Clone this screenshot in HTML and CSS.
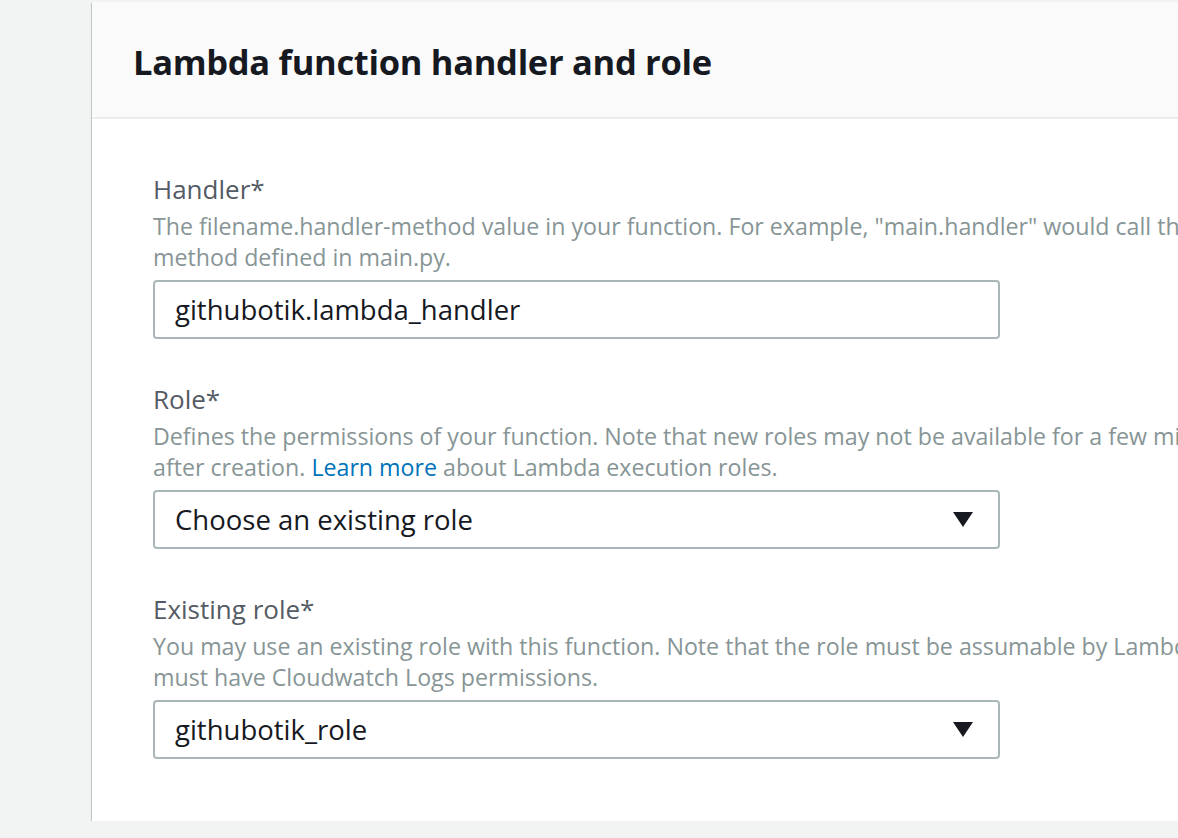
FILE: index.html
```html
<!DOCTYPE html>
<html>
<head>
<meta charset="utf-8">
<link rel="stylesheet" href="styles.css">
</head>
<body>
<div class="page">
  <section class="card">
    <header class="card-header">
      <h2 class="card-title">Lambda function handler and role</h2>
    </header>
    <div class="card-body">
      <div class="field">
        <div class="label">Handler*</div>
        <div class="desc">The filename.handler-method value in your function. For example, "main.handler" would call the handler<br>method defined in main.py.</div>
        <div class="input">githubotik.lambda_handler</div>
      </div>
      <div class="field">
        <div class="label">Role*</div>
        <div class="desc">Defines the permissions of your function. Note that new roles may not be available for a few minutes<br>after creation. <a class="link" href="#">Learn more</a> about Lambda execution roles.</div>
        <div class="input select"><span>Choose an existing role</span><span class="caret"></span></div>
      </div>
      <div class="field">
        <div class="label">Existing role*</div>
        <div class="desc">You may use an existing role with this function. Note that the role must be assumable by Lambda and<br>must have Cloudwatch Logs permissions.</div>
        <div class="input select"><span>githubotik_role</span><span class="caret"></span></div>
      </div>
    </div>
  </section>
</div>
</body>
</html>
```

FILE: styles.css
```css
html, body {
  margin: 0;
  padding: 0;
  background: #f2f3f3;
  font-family: "Open Sans", "Noto Sans", sans-serif;
  overflow: hidden;
}
.page {
  padding: 2px 0 0 92px;
  width: 1200px;
}
.card {
  width: 1200px;
  background: #fff;
  box-shadow: 0 1px 1px 0 rgba(0,28,36,0.3), 1px 1px 1px 0 rgba(0,28,36,0.15), -1px 1px 1px 0 rgba(0,28,36,0.15);
}
.card-header {
  background: #fafafa;
  border-bottom: 2px solid #eaeded;
  height: 117px;
  box-sizing: border-box;
  display: flex;
  align-items: center;
  padding: 3px 41px 0;
}
.card-title {
  margin: 0;
  font-size: 34.5px;
  font-weight: 700;
  color: #16191f;
  letter-spacing: -0.3px;
}
.card-body {
  padding: 52px 61px 62px;
  display: flex;
  flex-direction: column;
  gap: 42px;
}
.field {
  width: 1200px;
}
.label {
  font-size: 26px;
  color: #545b64;
  line-height: 36px;
  margin-bottom: 4px;
}
.desc {
  font-size: 23.2px;
  line-height: 31px;
  color: #879596;
  white-space: nowrap;
}
.link {
  color: #0073bb;
  text-decoration: none;
}
.input {
  margin-top: 7px;
  width: 847px;
  height: 59px;
  box-sizing: border-box;
  border: 2px solid #aab7b8;
  border-radius: 4px;
  padding: 0 20px;
  display: flex;
  align-items: center;
  font-size: 27.5px;
  color: #16191f;
}
.select {
  justify-content: space-between;
}
.caret {
  width: 0;
  height: 0;
  border-left: 10px solid transparent;
  border-right: 10px solid transparent;
  border-top: 15px solid #16191f;
  margin-right: 5px;
}
```
